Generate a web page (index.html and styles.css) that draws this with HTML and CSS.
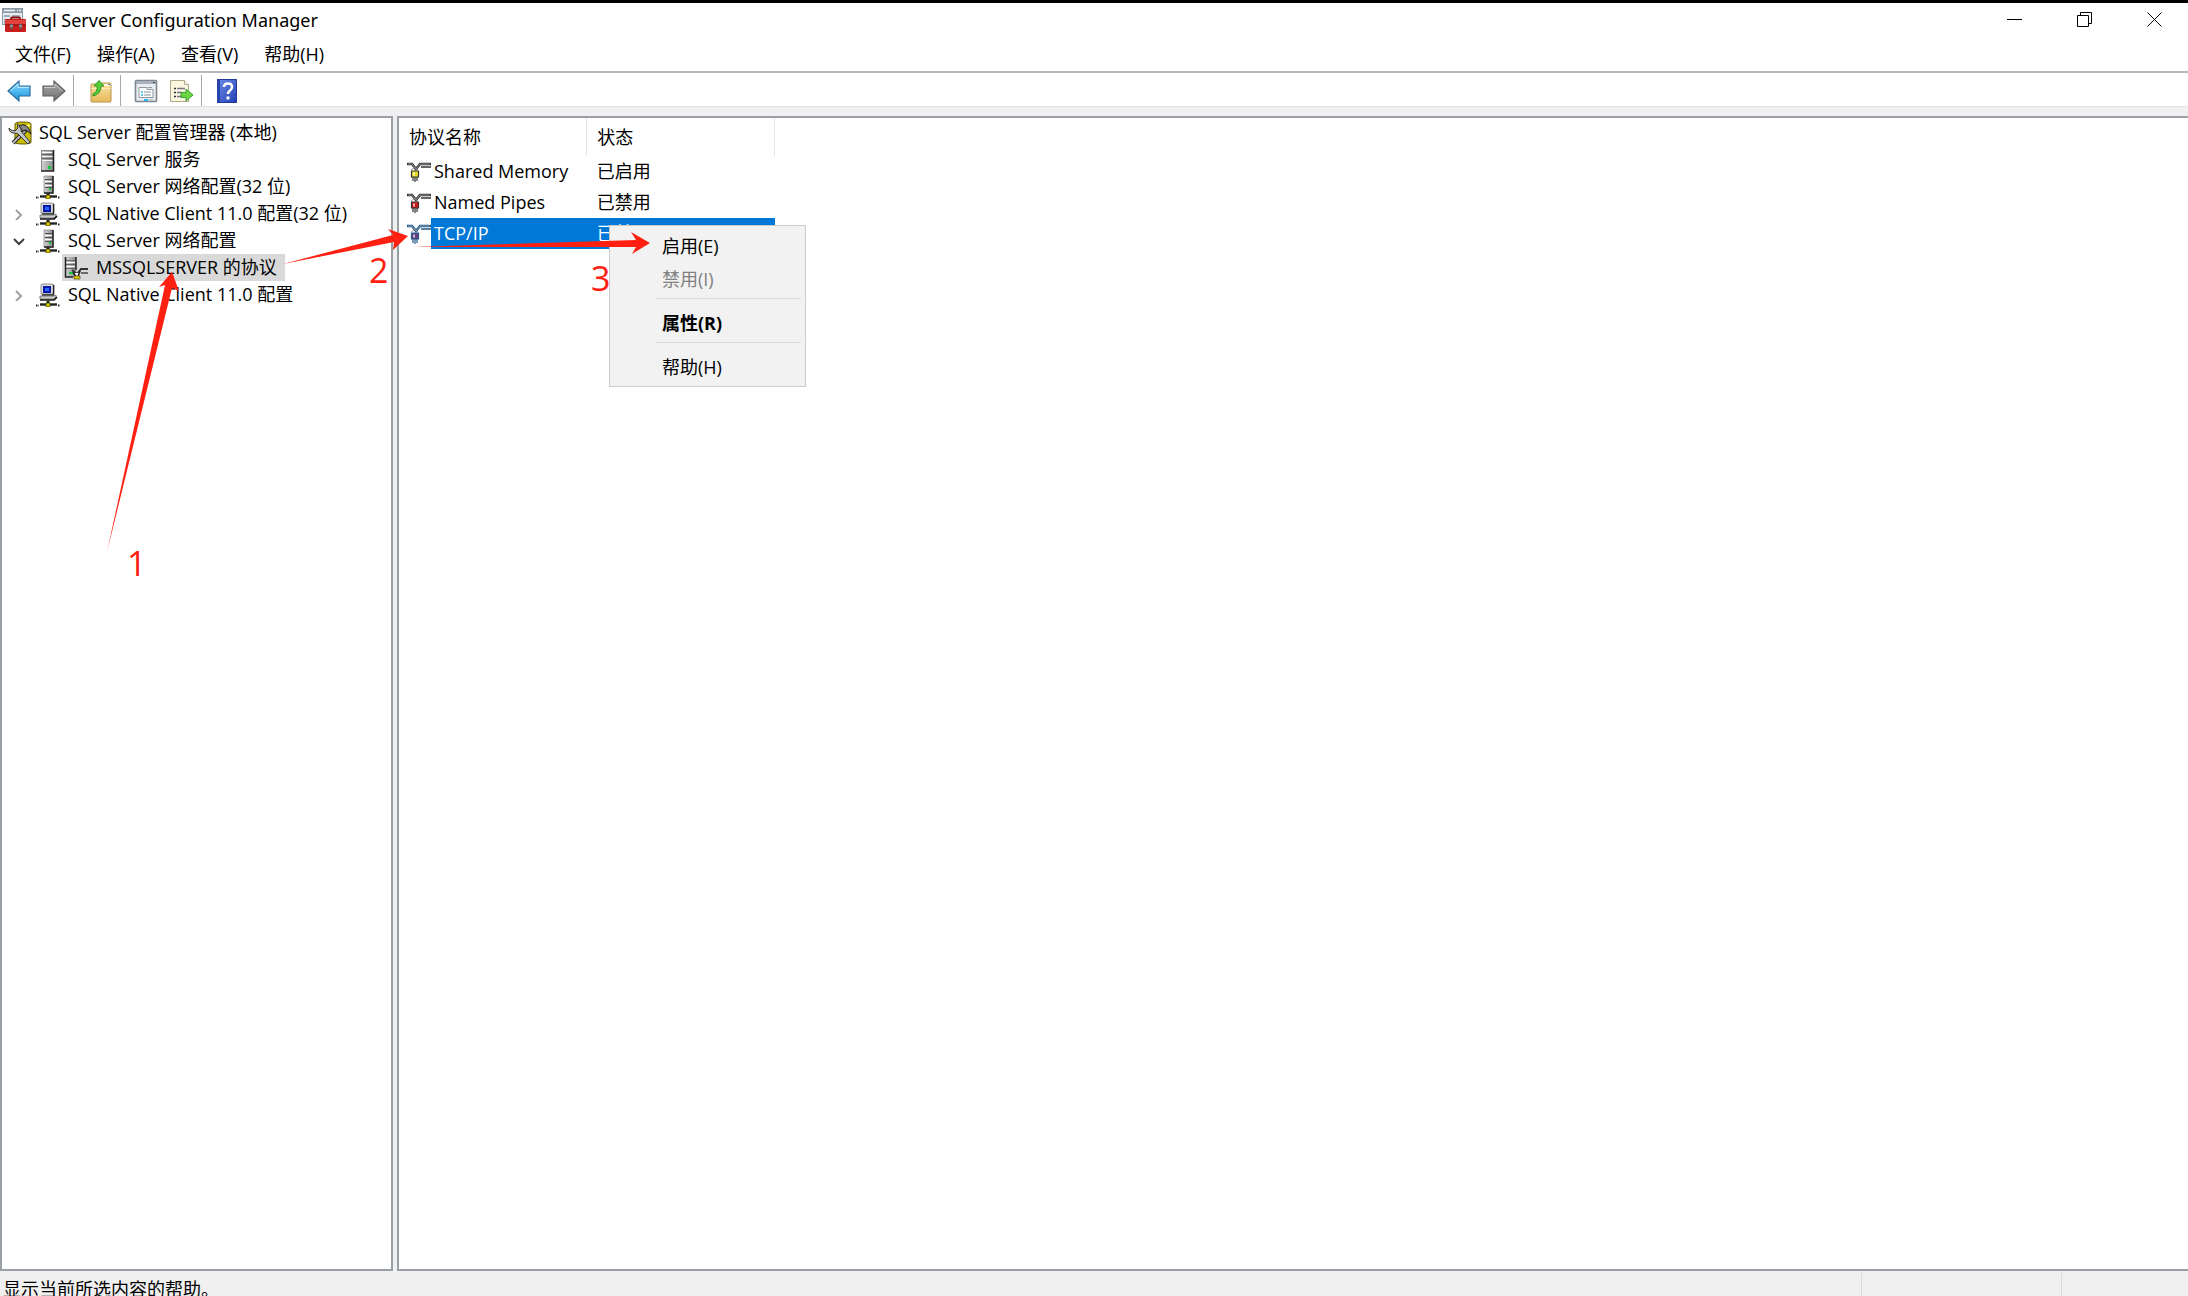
FILE: index.html
```html
<!DOCTYPE html>
<html lang="zh-CN">
<head>
<meta charset="utf-8">
<title>Sql Server Configuration Manager</title>
<link rel="stylesheet" href="styles.css">
</head>
<body>
<svg class="sprites" aria-hidden="true">
  <defs>
    <linearGradient id="steel" x1="0" x2="1"><stop offset="0" stop-color="#d4d4d4"/><stop offset="1" stop-color="#8c8c8c"/></linearGradient>
    <linearGradient id="sky" x1="0" x2="0" y1="0" y2="1"><stop offset="0" stop-color="#8fdcfb"/><stop offset="1" stop-color="#1593e2"/></linearGradient>
    <linearGradient id="ash" x1="0" x2="0" y1="0" y2="1"><stop offset="0" stop-color="#a8a8a8"/><stop offset="1" stop-color="#707070"/></linearGradient>
    <linearGradient id="folder" x1="0" x2="0" y1="0" y2="1"><stop offset="0" stop-color="#fbe3a0"/><stop offset="1" stop-color="#e6b95a"/></linearGradient>
    <linearGradient id="royal" x1="0" x2="1" y1="0" y2="1"><stop offset="0" stop-color="#6a8de8"/><stop offset="1" stop-color="#2440b4"/></linearGradient>
  </defs>
  <symbol id="server" viewBox="0 0 24 24">
    <path d="M5 2h13v21H5z" fill="url(#steel)"/>
    <path d="M5 2.500h13M5.500 2v21" stroke="#8a8a8a" fill="none"/>
    <path d="M6 4.500h10" stroke="#fff"/>
    <path d="M6 6.500h11M6 10.500h11" stroke="#666" stroke-width="1.300"/>
    <path d="M6 8.500h11M6 12.500h11" stroke="#f3f3f3"/>
    <path d="M17.500 2v21H5" fill="none" stroke="#222" stroke-width="1.600"/>
    <path d="M12 18h3v3h-3z" fill="#08c838"/>
  </symbol>
  <symbol id="net-server" viewBox="0 0 24 24">
    <path d="M8 1h9v17H8z" fill="url(#steel)" stroke="#777" stroke-width=".6"/>
    <path d="M9 4.500h7M9 8.500h7M9 12.500h7" stroke="#555" stroke-width="1.200"/>
    <path d="M9 6.500h7M9 10.500h7" stroke="#fff"/>
    <path d="M17 1v17H8" fill="none" stroke="#222" stroke-width="1.500"/>
    <path d="M13 13h2v2h-2z" fill="#0c3"/>
    <path d="M12 18v2" stroke="#222" stroke-width="3"/>
    <path d="M4 21.500h17" stroke="#222" stroke-width="2.400"/>
    <path d="M0 22.500h3m19 0h2" stroke="#222" stroke-width="2" stroke-dasharray="1.500 1"/>
    <path d="M10 20h4v4h-4z" fill="#d8c800" stroke="#443e00" stroke-width=".8"/>
  </symbol>
  <symbol id="net-client" viewBox="0 0 24 24">
    <path d="M6 1h10l2 1v9H5V2z" fill="#ddd" stroke="#777" stroke-width=".8"/>
    <path d="M17.500 2v10H6" stroke="#222" stroke-width="1.300" fill="none"/>
    <path d="M7 3h8v7H7z" fill="#0718a8"/>
    <path d="M9 5h4v3H9z" fill="#2a68ff"/>
    <path d="M4 13h14l2-1v4H4z" fill="#ccc" stroke="#666" stroke-width=".8"/>
    <path d="M4 17h14l3-3" stroke="#111" stroke-width="1.600" fill="none"/>
    <path d="M12 18v2" stroke="#222" stroke-width="3"/>
    <path d="M4 21.500h17" stroke="#222" stroke-width="2.400"/>
    <path d="M0 22.500h3m19 0h2" stroke="#222" stroke-width="2" stroke-dasharray="1.500 1"/>
    <path d="M10 20h4v4h-4z" fill="#d8c800" stroke="#443e00" stroke-width=".8"/>
  </symbol>
  <symbol id="protocols" viewBox="0 0 24 24">
    <path d="M1 1h11v20H1z" fill="url(#steel)"/>
    <path d="M1 4.500h10M1 8.500h10M1 12.500h10" stroke="#666"/>
    <path d="M1 6.500h10M1 10.500h10" stroke="#fff"/>
    <path d="M12 1v13M1.500 1v20H9" fill="none" stroke="#222" stroke-width="1.500"/>
    <path d="M5 16h4v2H5z" fill="#0c3"/>
    <path d="M8 14l5 4 4-5h7" fill="none" stroke="#333" stroke-width="2"/>
    <path d="M17 17h7" stroke="#444" stroke-width="1.500"/>
    <path d="M11 17h5v6h-5z" fill="#eee"/>
    <path d="M9 16l3 5M16 15l-2 6" stroke="#222" stroke-width="1.500"/>
    <path d="M10 20h6v3h-6z" fill="#e0cc00" stroke="#4a4400" stroke-width=".7"/>
  </symbol>
  <symbol id="plug" viewBox="0 0 24 20">
    <path d="M0 2h5l4 5 4-5h11" fill="none" stroke="currentColor" stroke-width="2.600"/>
    <path d="M1 2h4l4 5 4-5h10" fill="none" stroke="#b8b8b8" stroke-width=".7"/>
    <path d="M14 5h10" stroke="currentColor" stroke-width="1.500"/>
    <path d="M4.500 8l3-3 3 3" fill="none" stroke="#888"/>
    <path d="M4.500 9h7v6h-7z" fill="var(--plug)" stroke="currentColor" stroke-width="1.200"/>
    <path d="M6 10.500h2v3H6z" fill="#fff" opacity=".65"/>
    <path d="M6 15v4M8 15v5M10 15v4" stroke="currentColor" stroke-width="1.200"/>
  </symbol>
</svg>

<header class="titlebar">
  <svg class="app-icon" viewBox="0 0 24 24" aria-hidden="true">
    <path d="M0 0h21v17H0z" fill="#8b98a5"/><path d="M1 5h19v11H1z" fill="#e7ebef"/>
    <path d="M2 2.500h11M15 2.500h1m1 0h2" stroke="#eef2f5" stroke-width="1.500"/>
    <path d="M2 7h6v2H2zm8 0h8v2h-8zM2 11h4v5H2z" fill="#a3adb7"/>
    <path d="M9 12v-1.500q0-1 1-1h7q1 0 1 1V12" fill="none" stroke="#8a1010" stroke-width="1.800"/>
    <path d="M4 11h19q1 0 1 1v11q0 1-1 1H4q-1 0-1-1V12q0-1 1-1z" fill="#c81f1c"/>
    <path d="M3 12h21v4H3z" fill="#e2413b"/><path d="M3 17h21" stroke="#8e1311"/>
    <path d="M8 16h3v5H8zm9 0h3v5h-3z" fill="#605858"/><path d="M8.500 17h2v2h-2zm9 0h2v2h-2z" fill="#aaa"/>
  </svg>
  <h1 class="title">Sql Server Configuration Manager</h1>
  <div class="window-controls">
    <button type="button" aria-label="最小化"><svg viewBox="0 0 16 16"><path d="M0 7.500h15"/></svg></button>
    <button type="button" aria-label="还原"><svg viewBox="0 0 16 16"><path d="M.5 3.500h11v11H.5zM3.500 3.500v-3h11v11h-3"/></svg></button>
    <button type="button" aria-label="关闭"><svg viewBox="0 0 16 16"><path d="M.5.5l14 14M14.500.5l-14 14"/></svg></button>
  </div>
</header>

<nav class="menubar">
  <button type="button">文件(F)</button>
  <button type="button">操作(A)</button>
  <button type="button">查看(V)</button>
  <button type="button">帮助(H)</button>
</nav>

<div class="toolbar" role="toolbar">
  <div class="tool-group">
    <button type="button" aria-label="后退"><svg viewBox="0 0 24 24"><path d="M1 12L12 2v5h11v10H12v5z" fill="url(#sky)" stroke="#2b6c9e" stroke-width="1.200"/><path d="M3.500 12L11 5v3.500h11" fill="none" stroke="#b9ecff"/></svg></button>
    <button type="button" aria-label="前进"><svg viewBox="0 0 24 24"><path d="M23 12L12 2v5H1v10h11v5z" fill="url(#ash)" stroke="#5e5e5e" stroke-width="1.200"/><path d="M2 8.500h11V5l7.500 7" fill="none" stroke="#c9c9c9"/></svg></button>
  </div>
  <div class="tool-group">
    <button type="button" aria-label="上一级"><svg viewBox="0 0 24 24"><path d="M2 6q0-1 1-1h8l2-1h8q1 0 1 1v17q0 1-1 1H3q-1 0-1-1z" fill="url(#folder)" stroke="#b8934a"/><path d="M15 5h6v2h-6z" fill="#fff8df"/><path d="M19 5h2v1h-2z" fill="#338bd8"/><path d="M2.500 9.500h19" stroke="#fff0bd"/><path d="M4 15q5-2 4-8H5l5-5.500L15 7h-3q0 8-8 10z" fill="#55cc38" stroke="#2f9628"/></svg></button>
  </div>
  <div class="tool-group">
    <button type="button" aria-label="属性"><svg viewBox="0 0 24 24"><rect x="1.500" y="1.500" width="21" height="21" rx="1" fill="#e9edf0" stroke="#7d8790" stroke-width="1.600"/><path d="M2 2h20v3H2z" fill="#a9b2ba"/><path d="M19 3.500h2" stroke="#35424e"/><path d="M5 8.500h8v2h6v8H5z" fill="#fff" stroke="#8d98a1"/><path d="M14 8.500h4" stroke="#8d98a1"/><path d="M7 13h2M7 16h2" stroke="#2cb2e8" stroke-width="1.500"/><path d="M10 13h7M10 16h7" stroke="#85909a"/><path d="M10 20h4v2h-4z" fill="#27b8ef"/><path d="M15 20h4v2h-4z" fill="#c0c8ce"/></svg></button>
    <button type="button" aria-label="导出列表"><svg viewBox="0 0 24 24"><path d="M1.500 1.500h14l4 4v17h-18z" fill="#fbf7e1" stroke="#b0a98a"/><path d="M15.500 1.500v4h4" fill="#fff" stroke="#b0a98a"/><path d="M5 9.500h2M5 13.500h2M5 17.500h2" stroke="#333" stroke-width="1.500"/><path d="M8 9.500h8M8 13.500h5M8 17.500h5" stroke="#77718a" stroke-width="1.300"/><path d="M12 13.500h5V10l7 6-7 6v-3.500h-5z" fill="#6bd545" stroke="#3aa22e"/></svg></button>
  </div>
  <div class="tool-group">
    <button type="button" aria-label="帮助"><svg viewBox="0 0 24 24"><path d="M2.500.5h19v23h-19z" fill="url(#royal)" stroke="#22389a"/><path d="M2 0h3v24H2z" fill="#2743ac"/><path d="M9 8q0-3.500 4-3.500T17 8q0 2-2 3.500T13 15" fill="none" stroke="#fff" stroke-width="2.500"/><path d="M11.500 17.500h3v3h-3z" fill="#fff"/></svg></button>
  </div>
</div>

<main class="workspace">
  <aside class="pane tree-pane">
    <ul class="tree">
      <li>
        <div class="node root">
          <svg class="node-icon" viewBox="0 0 24 24" aria-hidden="true"><path d="M7 3q0-2 8-2t8 2v18q0 2-8 2t-8-2z" fill="#c9bd00" stroke="#615b00"/><path d="M8 4q7 3 14 0" stroke="#fff67b" stroke-width="2" fill="none"/><path d="M18 9L5 22" stroke="#222" stroke-width="4"/><path d="M17 10L5 22" stroke="#bbb" stroke-width="2"/><path d="M1 7q0 5 5 5l4 1 10 10 2-2-9-11q1-5-4-7l1 4-3 3-4-1z" fill="#c4c4c4" stroke="#333"/><path d="M11 5q8-5 12 8l-5-4-3 1z" fill="#888" stroke="#222"/></svg>
          <span>SQL Server 配置管理器 (本地)</span>
        </div>
        <ul>
          <li><div class="node"><span class="toggle"></span><svg class="node-icon"><use href="#server"/></svg><span>SQL Server 服务</span></div></li>
          <li><div class="node"><span class="toggle"></span><svg class="node-icon"><use href="#net-server"/></svg><span>SQL Server 网络配置(32 位)</span></div></li>
          <li><div class="node"><button type="button" class="toggle" aria-label="展开"><svg viewBox="0 0 12 12"><path d="M3 2l5 5-5 5"/></svg></button><svg class="node-icon"><use href="#net-client"/></svg><span>SQL Native Client 11.0 配置(32 位)</span></div></li>
          <li>
            <div class="node"><button type="button" class="toggle open" aria-label="折叠"><svg viewBox="0 0 12 12"><path d="M1 4l5 5 5-5"/></svg></button><svg class="node-icon"><use href="#net-server"/></svg><span>SQL Server 网络配置</span></div>
            <ul>
              <li><div class="node leaf selected"><svg class="node-icon"><use href="#protocols"/></svg><span>MSSQLSERVER 的协议</span></div></li>
            </ul>
          </li>
          <li><div class="node"><button type="button" class="toggle" aria-label="展开"><svg viewBox="0 0 12 12"><path d="M3 2l5 5-5 5"/></svg></button><svg class="node-icon"><use href="#net-client"/></svg><span>SQL Native Client 11.0 配置</span></div></li>
        </ul>
      </li>
    </ul>
  </aside>

  <section class="pane list-pane">
    <table class="protocols">
      <thead><tr><th scope="col">协议名称</th><th scope="col">状态</th></tr></thead>
      <tbody>
        <tr><td><div class="name"><svg class="plug yellow"><use href="#plug"/></svg><span>Shared Memory</span></div></td><td>已启用</td></tr>
        <tr><td><div class="name"><svg class="plug red"><use href="#plug"/></svg><span>Named Pipes</span></div></td><td>已禁用</td></tr>
        <tr class="selected"><td><div class="name"><svg class="plug blue"><use href="#plug"/></svg><span>TCP/IP</span></div></td><td>已禁用</td></tr>
      </tbody>
    </table>
    <div class="context-menu" role="menu">
      <button type="button" role="menuitem">启用(E)</button>
      <button type="button" role="menuitem" disabled>禁用(I)</button>
      <hr>
      <button type="button" role="menuitem" class="default">属性(R)</button>
      <hr>
      <button type="button" role="menuitem">帮助(H)</button>
    </div>
  </section>
</main>

<footer class="statusbar">
  <span class="status-text">显示当前所选内容的帮助。</span>
  <span class="status-cell wide"></span>
  <span class="status-cell"></span>
</footer>

<svg class="annotations" aria-hidden="true">
  <polygon points="107,552 165,285 159,287 172,272 179,291 172,288"/>
  <polygon points="283,264 393,235 388,229 408,236 393,250 394,242"/>
  <polygon points="413,247 636,240 631,232 650,243 632,254 636,247"/>
  <text x="127" y="576">1</text>
  <text x="369" y="283">2</text>
  <text x="591" y="291">3</text>
</svg>
</body>
</html>
```
FILE: styles.css
```css
* { box-sizing: border-box; }

body {
  margin: 0;
  height: 100vh;
  display: flex;
  flex-direction: column;
  overflow: hidden;
  position: relative;
  background: #f0f0f0;
  color: #000;
  font: 18px/27px "Open Sans", "Noto Sans CJK SC", sans-serif;
}

button {
  font: inherit;
  color: inherit;
  background: none;
  border: 0;
  padding: 0;
}

ul { list-style: none; margin: 0; padding: 0; }

.sprites { position: absolute; width: 0; height: 0; }

.titlebar {
  display: flex;
  align-items: center;
  height: 37px;
  border-top: 3px solid #000;
  background: #fff;
  padding: 0 10px 0 2px;
}
.app-icon { width: 24px; height: 24px; }
.title {
  margin: 0 auto 0 5px;
  font-family: "Noto Sans", sans-serif;
  font-size: 18px;
  font-weight: 400;
}
.window-controls { display: flex; gap: 24px; }
.window-controls button {
  width: 46px;
  height: 34px;
  display: grid;
  place-items: center;
}
.window-controls svg {
  width: 16px;
  height: 16px;
  fill: none;
  stroke: #000;
}

.menubar {
  display: flex;
  gap: 26px;
  padding: 0 15px;
  height: 34px;
  line-height: 35px;
  background: #fff;
}

.toolbar {
  display: flex;
  height: 36px;
  border-top: 2px solid #b8bbbd;
  border-bottom: 1px solid #e2e2e2;
  background: #fff;
  padding: 2px 0 0;
}
.tool-group {
  display: flex;
  align-items: center;
  gap: 11px;
  padding: 0 7px 0 15px;
  border-left: 1px solid #a8a8a8;
}
.tool-group:first-child { border: 0; padding-left: 7px; }
.tool-group button { width: 24px; height: 24px; }
.tool-group svg { display: block; width: 24px; height: 24px; }
.tool-group:nth-child(3) { padding: 0 8px 0 13px; }
.tool-group:nth-child(4) { padding-left: 13px; }

.workspace {
  flex: 1;
  min-height: 0;
  display: flex;
  gap: 4px;
  padding-top: 9px;
}
.pane {
  background: #fff;
  border: 2px solid #9a9fa5;
}
.tree-pane { flex: 0 0 393px; }
.list-pane {
  flex: 1;
  border-right: 0;
  position: relative;
}

.tree { padding-top: 1px; }
.node {
  display: flex;
  align-items: center;
  height: 27px;
  white-space: nowrap;
}
.node-icon {
  flex: none;
  width: 24px;
  height: 24px;
  margin-right: 8px;
}
.root { padding-left: 6px; }
.root .node-icon { margin-right: 7px; }
.toggle {
  width: 24px;
  height: 24px;
  margin: 0 5px;
  display: grid;
  place-items: center;
}
.toggle svg {
  width: 12px;
  height: 12px;
  fill: none;
  stroke: #a0a0a0;
  stroke-width: 2;
}
.toggle.open svg { stroke: #404040; }
.leaf {
  width: max-content;
  margin-left: 60px;
  padding: 0 8px 0 2px;
}
.node.selected { background: #d9d9d9; }

.protocols {
  border-collapse: collapse;
  table-layout: fixed;
  width: 376px;
}
.protocols th {
  height: 38px;
  padding: 0 10px;
  text-align: left;
  font-weight: 400;
  border-right: 1px solid #e5e5e5;
}
.protocols td {
  height: 31px;
  padding: 0 10px;
}
.protocols td:first-child { padding: 0 0 0 8px; }
.name { display: flex; align-items: center; }
.name span { flex: 1; padding-left: 3px; line-height: 31px; }
.selected .name span,
.selected td:last-child { background: #0078d7; color: #fff; }
.plug { width: 24px; height: 20px; color: #333; }
.yellow { --plug: #e8dc20; }
.red { --plug: #d81818; }
.blue { --plug: #6a3a80; color: #235a8e; }

.context-menu {
  position: absolute;
  left: 210px;
  top: 107px;
  width: 197px;
  padding: 4px 4px 2px 46px;
  background: #f2f2f2;
  border: 1px solid #ccc;
}
.context-menu button {
  display: block;
  width: 100%;
  height: 33px;
  padding-left: 6px;
  text-align: left;
}
.context-menu button:disabled { color: #808080; }
.context-menu .default { font-weight: 700; }
.context-menu hr {
  border: 0;
  border-top: 1px solid #dcdcdc;
  margin: 2px 0 8px;
}

.statusbar {
  display: flex;
  height: 25px;
  overflow: hidden;
  padding-top: 2px;
}
.status-text { flex: 1; padding: 3px; }
.status-cell {
  width: 127px;
  height: 30px;
  border-left: 1px solid #dadada;
}
.status-cell.wide { width: 200px; }

.annotations {
  position: absolute;
  inset: 0;
  width: 100%;
  height: 100%;
  pointer-events: none;
  fill: #ff2012;
  font-size: 34px;
}
```
